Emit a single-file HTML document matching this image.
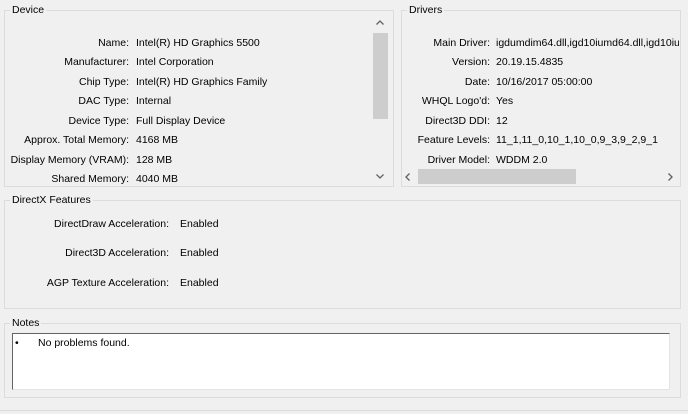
<!DOCTYPE html>
<html><head><style>
*{margin:0;padding:0;box-sizing:border-box}
body{width:688px;height:414px;background:#f0f0f0;font-family:"Liberation Sans",sans-serif;font-size:10.5px;color:#000;position:relative;overflow:hidden}
.gb{position:absolute;border:1px solid #dcdcdc}
.gt{position:absolute;background:#f0f0f0;padding:0 2px;top:-8px;left:5px;line-height:14px}
.t{position:absolute;white-space:nowrap;line-height:13px}
.r{text-align:right}
</style></head><body>
<div class="gb" style="left:4px;top:10px;width:390px;height:177px"><div class="gt">Device</div></div>
<div class="gb" style="left:401px;top:10px;width:280px;height:177px"><div class="gt">Drivers</div></div>
<div class="gb" style="left:4px;top:200px;width:677px;height:109px"><div class="gt">DirectX Features</div></div>
<div class="gb" style="left:4px;top:323px;width:677px;height:75px"><div class="gt">Notes</div></div>

<div style="position:absolute;left:372px;top:16px;width:17px;height:168px;background:#f0f0f0"></div>
<div style="position:absolute;left:373px;top:33px;width:15px;height:86px;background:#cdcdcd"></div>
<svg style="position:absolute;left:375px;top:19px" width="10" height="8"><path d="M1.5 5.5L5 2L8.5 5.5" stroke="#606060" stroke-width="1.3" fill="none"/></svg>
<svg style="position:absolute;left:375px;top:172px" width="10" height="8"><path d="M1.5 2.5L5 6L8.5 2.5" stroke="#606060" stroke-width="1.3" fill="none"/></svg>

<div style="position:absolute;left:402px;top:168px;width:278px;height:17px;background:#f0f0f0"></div>
<div style="position:absolute;left:418px;top:169px;width:158px;height:15px;background:#cdcdcd"></div>
<svg style="position:absolute;left:404px;top:172px" width="8" height="10"><path d="M5.5 1.5L2 5L5.5 8.5" stroke="#606060" stroke-width="1.3" fill="none"/></svg>
<svg style="position:absolute;left:666px;top:172px" width="8" height="10"><path d="M2.5 1.5L6 5L2.5 8.5" stroke="#606060" stroke-width="1.3" fill="none"/></svg>

<div class="t r" style="right:559px;top:37px">Name:</div><div class="t" style="left:136px;top:37px">Intel(R) HD Graphics 5500</div>
<div class="t r" style="right:559px;top:56px">Manufacturer:</div><div class="t" style="left:136px;top:56px">Intel Corporation</div>
<div class="t r" style="right:559px;top:76px">Chip Type:</div><div class="t" style="left:136px;top:76px">Intel(R) HD Graphics Family</div>
<div class="t r" style="right:559px;top:95px">DAC Type:</div><div class="t" style="left:136px;top:95px">Internal</div>
<div class="t r" style="right:559px;top:115px">Device Type:</div><div class="t" style="left:136px;top:115px">Full Display Device</div>
<div class="t r" style="right:559px;top:134px">Approx. Total Memory:</div><div class="t" style="left:136px;top:134px">4168 MB</div>
<div class="t r" style="right:559px;top:154px">Display Memory (VRAM):</div><div class="t" style="left:136px;top:154px">128 MB</div>
<div class="t r" style="right:559px;top:173px">Shared Memory:</div><div class="t" style="left:136px;top:173px">4040 MB</div>

<div style="position:absolute;left:402px;top:30px;width:277px;height:138px;overflow:hidden">
<div class="t r" style="right:189px;top:7px">Main Driver:</div><div class="t" style="left:94px;top:7px">igdumdim64.dll,igd10iumd64.dll,igd10iumd64.dll</div>
<div class="t r" style="right:189px;top:26px">Version:</div><div class="t" style="left:94px;top:26px">20.19.15.4835</div>
<div class="t r" style="right:189px;top:46px">Date:</div><div class="t" style="left:94px;top:46px">10/16/2017 05:00:00</div>
<div class="t r" style="right:189px;top:65px">WHQL Logo'd:</div><div class="t" style="left:94px;top:65px">Yes</div>
<div class="t r" style="right:189px;top:85px">Direct3D DDI:</div><div class="t" style="left:94px;top:85px">12</div>
<div class="t r" style="right:189px;top:104px">Feature Levels:</div><div class="t" style="left:94px;top:104px">11_1,11_0,10_1,10_0,9_3,9_2,9_1</div>
<div class="t r" style="right:189px;top:124px">Driver Model:</div><div class="t" style="left:94px;top:124px">WDDM 2.0</div>
</div>

<div class="t r" style="right:519px;top:218px">DirectDraw Acceleration:</div><div class="t" style="left:180px;top:218px">Enabled</div>
<div class="t r" style="right:519px;top:247px">Direct3D Acceleration:</div><div class="t" style="left:180px;top:247px">Enabled</div>
<div class="t r" style="right:519px;top:277px">AGP Texture Acceleration:</div><div class="t" style="left:180px;top:277px">Enabled</div>

<div style="position:absolute;left:12px;top:333px;width:658px;height:57px;background:#fff;border-top:1px solid #646464;border-left:1px solid #646464;border-right:1px solid #e3e3e3;border-bottom:1px solid #e3e3e3"></div>
<div class="t" style="left:15px;top:337px">•</div>
<div class="t" style="left:38px;top:337px">No problems found.</div>

<div style="position:absolute;left:0;top:410px;width:688px;height:1px;background:#dcdcdc"></div>
</body></html>
